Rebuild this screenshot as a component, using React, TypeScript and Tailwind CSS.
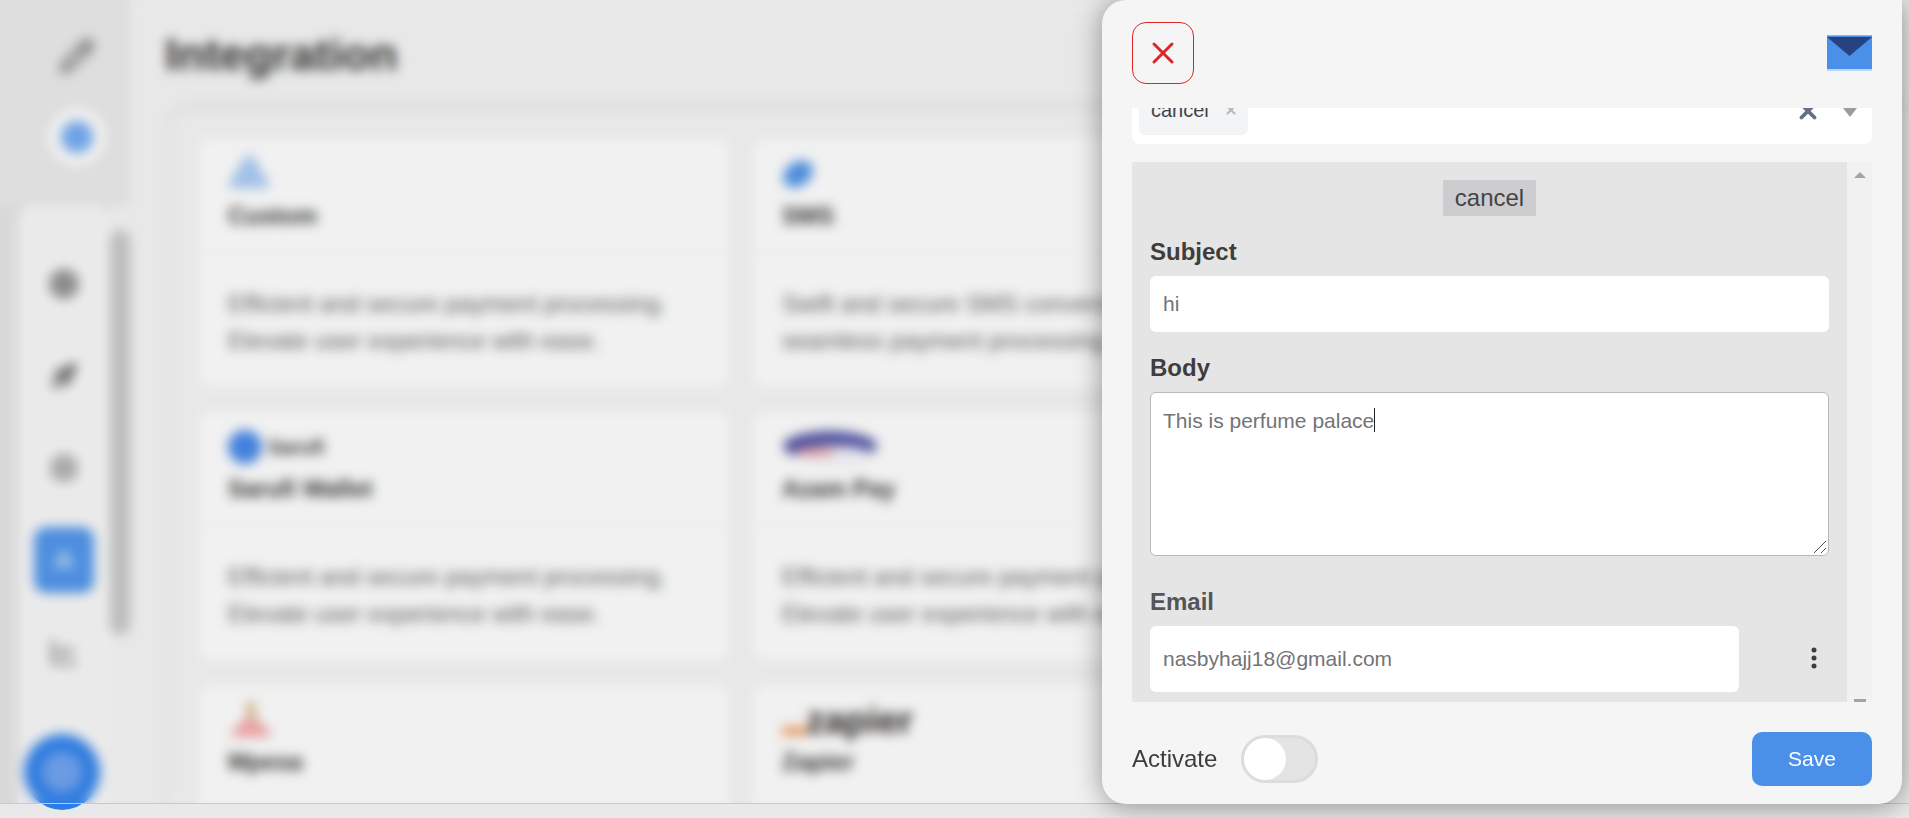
import { ChartLine, Pencil, Rocket, Settings, X } from 'lucide-react'
import type { ReactNode } from 'react'

const PAYMENT_TEXT =
  'Efficient and secure payment processing. Elevate user experience with ease.'
const SMS_TEXT =
  'Swift and secure SMS conversations for seamless payment processing needs.'

function TriangleLogo({ color = '#a3c6f0', size = 42 }: { color?: string; size?: number }) {
  return (
    <svg width={size} height={size * 0.9} viewBox="0 0 42 38" fill={color}>
      <path
        d="M21 2 38 30H4z"
        stroke={color}
        strokeWidth="7"
        strokeLinejoin="round"
      />
    </svg>
  )
}

function SmsLogo() {
  return (
    <svg width="34" height="36" viewBox="0 0 34 36">
      <ellipse cx="16" cy="18" rx="16" ry="12" fill="#4a8fe3" transform="rotate(-35 16 18)" />
    </svg>
  )
}

function SarufiLogo() {
  return (
    <div className="flex items-center gap-[6px]">
      <div className="w-[34px] h-[34px] rounded-full bg-[#3f82e4]" />
      <span className="text-[20px] font-bold text-[#333]">Sarufi</span>
    </div>
  )
}

function AzamLogo() {
  return (
    <svg width="96" height="38" viewBox="0 0 96 38">
      <ellipse cx="48" cy="18" rx="47" ry="15" fill="#4a4ea0" />
      <ellipse cx="52" cy="27" rx="38" ry="9" fill="#eeeef6" />
      <ellipse cx="34" cy="24" rx="20" ry="4" fill="#f09a9a" />
    </svg>
  )
}

function MpesaLogo() {
  return (
    <svg width="46" height="40" viewBox="0 0 46 40">
      <rect x="19" y="2" width="8" height="16" fill="#cdb078" />
      <path d="M2 37c6-12 14-19 21-19s15 7 21 19z" fill="#f2a3a3" />
    </svg>
  )
}

function ZapierLogo() {
  return (
    <div className="flex items-end h-[38px]">
      <div className="w-[24px] h-[8px] mb-[4px] bg-[#f08a4b]" />
      <span className="text-[37px] leading-[36px] font-bold text-[#1f1a18]">zapier</span>
    </div>
  )
}

function Card({ logo, title, text }: { logo: ReactNode; title: string; text: string }) {
  return (
    <div className="h-[252px] rounded-[14px] bg-[#fbfbfb] shadow-[0_0_10px_rgba(0,0,0,0.04)]">
      <div className="h-[118px] px-[30px] pt-[17px] border-b-[5px] border-[#f9f9f9]">
        <div className="h-[40px] flex items-center">{logo}</div>
        <div className="mt-[8px] text-[24px] leading-[28px] font-bold text-[#2e2e2e]">{title}</div>
      </div>
      <div className="px-[30px] pt-[30px] text-[24px] leading-[37px] text-[#5f5f5f]">{text}</div>
    </div>
  )
}

function NavIcon({ children }: { children: ReactNode }) {
  return <div className="h-[92px] flex items-center justify-center">{children}</div>
}

function Sidebar() {
  return (
    <aside className="w-[130px] h-full shrink-0 flex flex-col bg-[#e6e6e6]">
      <div className="h-[205px] shrink-0 flex flex-col items-center pt-[38px] pl-[24px]">
        <Pencil size={36} color="#666" strokeWidth={2.500} />
        <div className="mt-[34px] w-[58px] h-[58px] rounded-full bg-[#fafafa] flex items-center justify-center">
          <div className="w-[32px] h-[32px] rounded-full bg-[#6ea6ee]" />
        </div>
      </div>
      <div className="flex-1 flex min-h-0 bg-[#e0e0e0]">
        <div className="ml-[18px] w-[92px] rounded-t-[14px] bg-[#f4f4f4] pt-[33px]">
          <NavIcon>
            <div className="w-[30px] h-[30px] rounded-full bg-[#8f8f8f]" />
          </NavIcon>
          <NavIcon>
            <Rocket size={28} color="#666" fill="#666" />
          </NavIcon>
          <NavIcon>
            <Settings size={30} color="#888" strokeWidth={3} />
          </NavIcon>
          <NavIcon>
            <div className="w-[60px] h-[66px] rounded-[12px] bg-[#4a90e8] flex items-center justify-center">
              <TriangleLogo color="#9cc3f2" size={22} />
            </div>
          </NavIcon>
          <NavIcon>
            <ChartLine size={30} color="#8a8a8a" strokeWidth={3} />
          </NavIcon>
        </div>
        <div className="w-[20px] bg-[#f1f1f1] pt-[25px]">
          <div className="h-[405px] rounded-full bg-[#c2c2c2]" />
        </div>
      </div>
    </aside>
  )
}

function Background() {
  return (
    <div className="flex h-[804px] bg-[#f1f1f1] overflow-hidden">
      <Sidebar />
      <main className="flex-1 min-w-0 overflow-hidden">
        <div className="h-[110px] pt-[32px] pl-[35px]">
          <h1 className="text-[45px] leading-[46px] font-bold text-[#2b2b2b]">Integration</h1>
        </div>
        <div className="ml-[40px] pl-[28px] pt-[27px] rounded-tl-[24px] bg-[#f1f1f1] shadow-[0_-4px_14px_rgba(0,0,0,0.07)]">
          <div className="grid grid-cols-[532px_532px] gap-x-[22px] gap-y-[21px]">
            <Card logo={<TriangleLogo />} title="Custom" text={PAYMENT_TEXT} />
            <Card logo={<SmsLogo />} title="SMS" text={SMS_TEXT} />
            <Card logo={<SarufiLogo />} title="Sarufi Wallet" text={PAYMENT_TEXT} />
            <Card logo={<AzamLogo />} title="Azam Pay" text={PAYMENT_TEXT} />
            <Card logo={<MpesaLogo />} title="Mpesa" text={PAYMENT_TEXT} />
            <Card logo={<ZapierLogo />} title="Zapier" text={PAYMENT_TEXT} />
          </div>
        </div>
      </main>
    </div>
  )
}

function Envelope() {
  return (
    <svg width="45" height="36" viewBox="0 0 45 36">
      <rect width="45" height="36" fill="#4a90e8" />
      <rect width="45" height="1" fill="#9fb0d0" />
      <rect y="34" width="45" height="2" fill="#bcd6f5" />
      <path d="M0 2h45L22.500 21z" fill="#27437f" />
    </svg>
  )
}

function Label({ children, color = 'text-[#3d3d3d]' }: { children: ReactNode; color?: string }) {
  return <div className={`text-[24px] leading-[28px] font-bold ${color}`}>{children}</div>
}

function Drawer() {
  return (
    <div className="absolute top-0 right-[7px] w-[800px] h-[804px] flex flex-col rounded-[24px] rounded-tr-none bg-[#f5f5f5] px-[30px] shadow-[0_2px_28px_rgba(0,0,0,0.4)]">
      <header className="h-[108px] shrink-0 flex items-start justify-between pt-[22px]">
        <button
          type="button"
          className="w-[62px] h-[62px] flex items-center justify-center rounded-[14px] border border-[#dc2626]"
        >
          <X size={36} color="#dc2626" strokeWidth={2} />
        </button>
        <div className="mt-[13px] leading-none">
          <Envelope />
        </div>
      </header>

      <div className="h-[36px] shrink-0 flex items-end justify-between overflow-hidden rounded-b-[8px] bg-white">
        <div className="ml-[7px] mb-[9px] w-[109px] h-[50px] shrink-0 flex items-center justify-between rounded-[6px] bg-[#f3f4f6] pl-[12px] pr-[10px]">
          <span className="text-[20px] text-[#444]">cancel</span>
          <X size={14} color="#b4b7bf" strokeWidth={3.500} />
        </div>
        <div className="flex items-end gap-[22px] mr-[15px]">
          <div className="mb-[20px]">
            <X size={26} color="#667085" strokeWidth={3.500} />
          </div>
          <div className="mb-[27px] w-0 h-0 border-x-[7px] border-x-transparent border-t-[9px] border-t-[#9c9c9c]" />
        </div>
      </div>

      <div className="h-[540px] shrink-0 mt-[18px] flex overflow-hidden">
        <div className="w-[715px] bg-[#e5e5e5] px-[18px] pt-[18px]">
          <div className="flex justify-center">
            <span className="w-[93px] h-[36px] flex items-center justify-center bg-[#cdcdcf] text-[24px] text-[#444]">
              cancel
            </span>
          </div>
          <div className="mt-[22px]">
            <Label>Subject</Label>
          </div>
          <div className="mt-[10px] h-[56px] flex items-center rounded-[6px] bg-white px-[13px] text-[21px] text-[#737378]">
            hi
          </div>
          <div className="mt-[22px]">
            <Label>Body</Label>
          </div>
          <div className="relative mt-[10px] h-[164px] rounded-[6px] border border-[#b8b8b8] bg-white px-[12px] pt-[15px] text-[21px] leading-[26px] text-[#737378]">
            This is perfume palace
            <span className="inline-block w-px h-[24px] align-text-bottom bg-[#222]" />
            <svg className="absolute right-[1px] bottom-[1px]" width="14" height="14" viewBox="0 0 14 14" stroke="#555" fill="none">
              <path d="M1 13 13 1M8 13l5-5" />
            </svg>
          </div>
          <div className="mt-[32px]">
            <Label color="text-[#54545a]">Email</Label>
          </div>
          <div className="mt-[10px] flex items-center">
            <div className="w-[589px] h-[66px] flex items-center rounded-[6px] bg-white px-[13px] text-[21px] text-[#737378]">
              nasbyhajj18@gmail.com
            </div>
            <svg className="ml-auto mr-[12px] mb-[2px]" width="6" height="22" viewBox="0 0 6 22" fill="#3d3d3d">
              <circle cx="3" cy="3" r="2.500" />
              <circle cx="3" cy="11" r="2.500" />
              <circle cx="3" cy="19" r="2.500" />
            </svg>
          </div>
        </div>
        <div className="flex-1 flex flex-col items-center justify-between bg-[#f1f1f1] pt-[10px]">
          <div className="w-0 h-0 border-x-[6px] border-x-transparent border-b-[6px] border-b-[#a3a3a3]" />
          <div className="w-[12px] h-[3px] bg-[#a3a3a3]" />
        </div>
      </div>

      <footer className="flex-1 flex items-center justify-between pt-[12px]">
        <div className="flex items-center gap-[24px]">
          <span className="text-[24px] text-[#3d3d3d]">Activate</span>
          <div className="w-[77px] h-[48px] flex items-center rounded-full border-[3px] border-[#dcdcdc] bg-[#e4e4e4]">
            <div className="w-[42px] h-[42px] rounded-full bg-white" />
          </div>
        </div>
        <button
          type="button"
          className="w-[120px] h-[54px] rounded-[10px] bg-[#4a90e8] text-[21px] text-white"
        >
          Save
        </button>
      </footer>
    </div>
  )
}

export default function App() {
  return (
    <div className="relative w-[1909px] h-[818px] overflow-hidden bg-[#e9e9e9] font-['Liberation_Sans',Arial,sans-serif]">
      <Background />
      {/* chat button sits on the page, so its lower edge shows under the overlay */}
      <div className="absolute left-[24px] top-[734px] w-[76px] h-[76px] rounded-full bg-[#2a7de8] flex items-center justify-center">
        <div className="w-[40px] h-[40px] rounded-full bg-[#6a9eec]" />
      </div>
      <div className="absolute left-0 top-0 w-full h-[804px] border-b border-[#c8c8c8] bg-[#808080]/8 backdrop-blur-[6px]" />
      <Drawer />
    </div>
  )
}
